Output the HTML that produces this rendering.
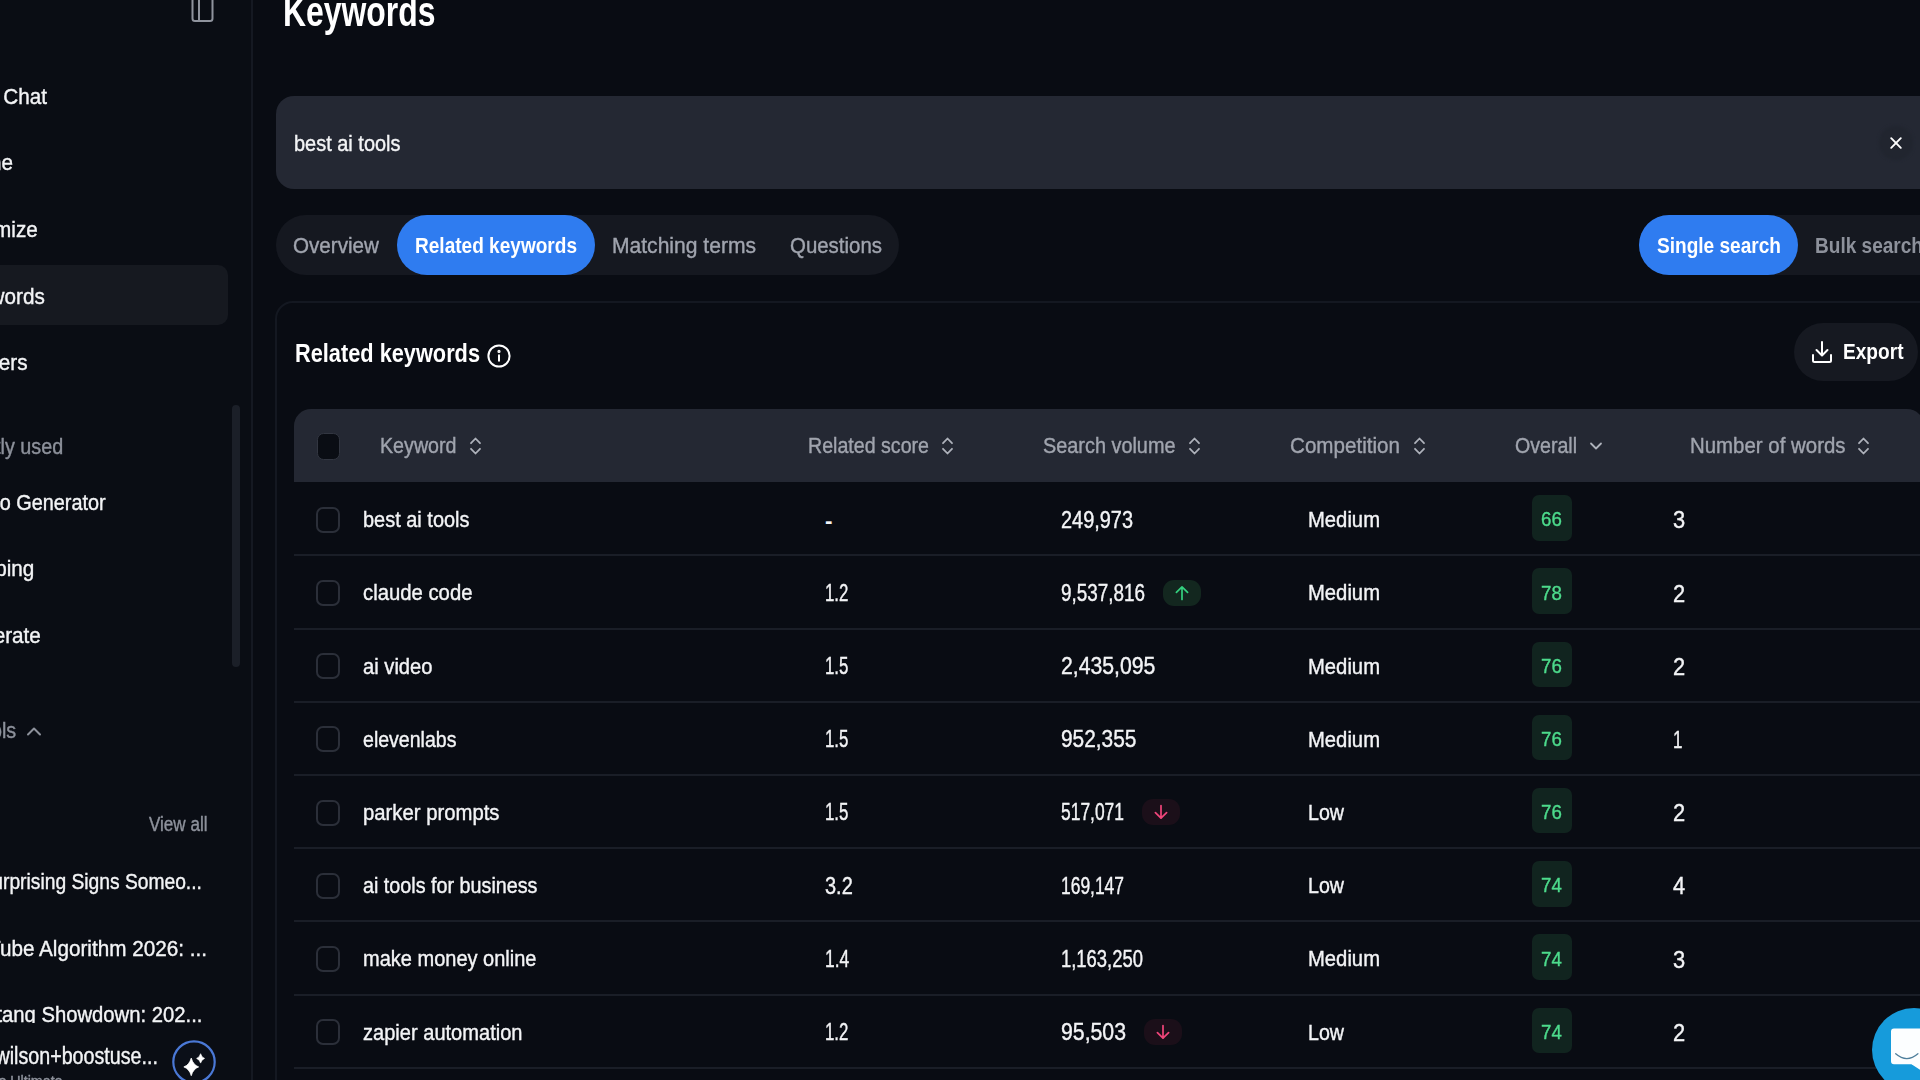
<!DOCTYPE html>
<html lang="en">
<head>
<meta charset="utf-8">
<title>Keywords</title>
<style>
*{box-sizing:border-box;margin:0;padding:0}
html,body{width:1920px;height:1080px;overflow:hidden;background:#090c13}
body{font-family:"Liberation Sans",sans-serif}
#app{position:relative;width:1920px;height:1080px;overflow:hidden;background:#090c13}
#app>*{position:absolute}
.t{white-space:nowrap;display:block;-webkit-text-stroke:0.4px currentColor}
.t.b{-webkit-text-stroke:0}
aside.side{left:0;top:0;width:253px;height:1080px;background:#0a0d14;border-right:2px solid #151922}
.navact{left:-20px;top:265px;width:248px;height:59.7px;border-radius:10px;background:#161920}
.sbar{left:232px;top:405px;width:8px;height:262px;border-radius:4px;background:#1b1f28}
.search{left:276px;top:96px;width:1700px;height:92.5px;border-radius:18px;background:#242833}
.xbtn{left:1878.5px;top:125.5px;width:34px;height:34px;border-radius:17px;background:#21252f;filter:blur(1.5px)}
.tabs{left:276px;top:215px;width:623.2px;height:60px;border-radius:30px;background:#151820}
.tabact{left:397px;top:215px;width:197.5px;height:60px;border-radius:30px;background:#2f7cf0}
.mode{left:1639px;top:215px;width:400px;height:60px;border-radius:30px;background:#151820}
.modeact{left:1639px;top:215px;width:158.5px;height:60px;border-radius:30px;background:#2f7cf0}
.card{left:275px;top:300.5px;width:1700px;height:900px;border-radius:18px;border:2px solid #141821;background:#090c13}
.export{left:1794px;top:322.5px;width:124px;height:58.5px;border-radius:30px;background:#161921}
.thead{left:293.5px;top:408.5px;width:1630px;height:73px;border-radius:17px 17px 0 0;background:#242833}
.hcb{left:316.5px;top:433px;width:23.5px;height:26.5px;border-radius:6.5px;background:#0a0d14;border:1.5px solid #323641}
.cb{left:316.2px;width:23.6px;height:26.2px;border-radius:7px;border:2px solid #2b2f39}
.sep{left:294px;width:1700px;height:2px;background:#1a1e27}
.badge{left:1532px;width:39.5px;height:45.5px;border-radius:7px;background:#11241f}
.trend{width:38px;height:26px;border-radius:11px;display:flex;align-items:center;justify-content:center}
.userbg{left:0;top:1022.5px;width:251px;height:60px;background:#0a0d14;z-index:2}
.ic{overflow:visible}

</style>
</head>
<body>
<div id="app">
<aside class="side"></aside>
<div class="navact"></div>
<div class="sbar"></div>
<svg class="ic" style="left:190px;top:-8px" width="26" height="32" viewBox="0 0 26 32" fill="none" stroke="#8f939d" stroke-width="2"><rect x="2.5" y="1" width="20" height="28" rx="2.5"/><path d="M9 1v28"/></svg>
<svg class="ic" style="left:26px;top:724px" width="16" height="14" viewBox="0 0 16 14" fill="none" stroke="#8d919b" stroke-width="2" stroke-linecap="round" stroke-linejoin="round"><path d="M2 10.5 8 4.5l6 6"/></svg>
<main class="search"></main>
<div class="xbtn"></div>
<svg class="ic" style="left:1889.5px;top:136.5px" width="12" height="12" viewBox="0 0 12 12" fill="none" stroke="#ffffff" stroke-width="1.9" stroke-linecap="round"><path d="M1.2 1.2l9.6 9.6M10.8 1.2 1.2 10.8"/></svg>
<nav class="tabs"></nav>
<div class="tabact"></div>
<div class="mode"></div>
<div class="modeact"></div>
<section class="card"></section>
<svg class="ic" style="left:486.5px;top:343.5px" width="24" height="24" viewBox="0 0 24 24" fill="none" stroke="#ffffff" stroke-width="2" stroke-linecap="round"><circle cx="12" cy="12" r="10.6"/><path d="M12 11.2v5.6"/><circle cx="12" cy="7.4" r="0.6" fill="#fff"/></svg>
<div class="export"></div>
<svg class="ic" style="left:1811px;top:340px" width="22" height="24" viewBox="0 0 22 24" fill="none" stroke="#ffffff" stroke-width="2" stroke-linecap="round" stroke-linejoin="round"><path d="M11 2v13M5.5 10 11 15.5 16.500 10M2 15v5.500a1.500 1.500 0 0 0 1.500 1.500h15a1.500 1.500 0 0 0 1.500-1.500V15"/></svg>
<div class="thead"></div>
<div class="hcb"></div>
<svg class="ic" style="left:469px;top:436px" width="13" height="20" viewBox="0 0 13 20" fill="none" stroke="#aeb2bb" stroke-width="1.8" stroke-linecap="round" stroke-linejoin="round"><path d="M2 7.2 6.500 2.500 11 7.200M2 12.800 6.500 17.500 11 12.800"/></svg>
<svg class="ic" style="left:940.5px;top:436px" width="13" height="20" viewBox="0 0 13 20" fill="none" stroke="#aeb2bb" stroke-width="1.8" stroke-linecap="round" stroke-linejoin="round"><path d="M2 7.2 6.500 2.500 11 7.200M2 12.800 6.500 17.500 11 12.800"/></svg>
<svg class="ic" style="left:1187.5px;top:436px" width="13" height="20" viewBox="0 0 13 20" fill="none" stroke="#aeb2bb" stroke-width="1.8" stroke-linecap="round" stroke-linejoin="round"><path d="M2 7.2 6.500 2.500 11 7.200M2 12.800 6.500 17.500 11 12.800"/></svg>
<svg class="ic" style="left:1412.5px;top:436px" width="13" height="20" viewBox="0 0 13 20" fill="none" stroke="#aeb2bb" stroke-width="1.8" stroke-linecap="round" stroke-linejoin="round"><path d="M2 7.2 6.500 2.500 11 7.200M2 12.800 6.500 17.500 11 12.800"/></svg>
<svg class="ic" style="left:1857px;top:436px" width="13" height="20" viewBox="0 0 13 20" fill="none" stroke="#aeb2bb" stroke-width="1.8" stroke-linecap="round" stroke-linejoin="round"><path d="M2 7.2 6.500 2.500 11 7.200M2 12.800 6.500 17.500 11 12.800"/></svg>
<svg class="ic" style="left:1589px;top:440px" width="14" height="12" viewBox="0 0 14 12" fill="none" stroke="#aeb2bb" stroke-width="1.8" stroke-linecap="round" stroke-linejoin="round"><path d="M2 3.500 7 8.500l5-5"/></svg>

<div class="cb" style="top:506.7px"></div>
<div class="sep" style="top:554.3px"></div>
<div class="badge" style="top:495.1px"></div>
<div class="cb" style="top:579.9px"></div>
<div class="sep" style="top:627.5px"></div>
<div class="badge" style="top:568.3px"></div>
<div class="trend" style="left:1163.0px;top:579.5px;background:#13271f"><svg width="20" height="20" viewBox="0 0 20 20" fill="none" stroke="#34d17f" stroke-width="1.7" stroke-linecap="round" stroke-linejoin="round"><path d="M10 16.5V3.8M4.4 9.4 10 3.800l5.600 5.600"/></svg></div>
<div class="cb" style="top:653.1px"></div>
<div class="sep" style="top:700.7px"></div>
<div class="badge" style="top:641.5px"></div>
<div class="cb" style="top:726.3px"></div>
<div class="sep" style="top:773.9px"></div>
<div class="badge" style="top:714.7px"></div>
<div class="cb" style="top:799.5px"></div>
<div class="sep" style="top:847.1px"></div>
<div class="badge" style="top:787.9px"></div>
<div class="trend" style="left:1142.0px;top:799.1px;background:#1b0f19"><svg width="20" height="20" viewBox="0 0 20 20" fill="none" stroke="#f0457a" stroke-width="1.7" stroke-linecap="round" stroke-linejoin="round"><path d="M10 3.500v12.700M4.400 10.600 10 16.200l5.600-5.600"/></svg></div>
<div class="cb" style="top:872.7px"></div>
<div class="sep" style="top:920.3px"></div>
<div class="badge" style="top:861.1px"></div>
<div class="cb" style="top:945.9px"></div>
<div class="sep" style="top:993.5px"></div>
<div class="badge" style="top:934.3px"></div>
<div class="cb" style="top:1019.1px"></div>
<div class="sep" style="top:1066.7px"></div>
<div class="badge" style="top:1007.5px"></div>
<div class="trend" style="left:1144.0px;top:1018.7px;background:#1b0f19"><svg width="20" height="20" viewBox="0 0 20 20" fill="none" stroke="#f0457a" stroke-width="1.7" stroke-linecap="round" stroke-linejoin="round"><path d="M10 3.500v12.700M4.400 10.600 10 16.200l5.600-5.600"/></svg></div>
<span class="t" style="font-size:22.5px;line-height:27.0px;top:82.70px;color:#f3f4f6;right:1872.8px;transform-origin:100% 0;transform:scaleX(0.9200);">AI Chat</span>
<span class="t" style="font-size:22.5px;line-height:27.0px;top:149.20px;color:#f3f4f6;right:1907.2px;transform-origin:100% 0;transform:scaleX(0.9200);">Home</span>
<span class="t" style="font-size:22.5px;line-height:27.0px;top:215.70px;color:#f3f4f6;right:1882.0px;transform-origin:100% 0;transform:scaleX(0.9200);">Optimize</span>
<span class="t" style="font-size:22.5px;line-height:27.0px;top:282.70px;color:#f3f4f6;right:1875.0px;transform-origin:100% 0;transform:scaleX(0.9200);">Keywords</span>
<span class="t" style="font-size:22.5px;line-height:27.0px;top:349.20px;color:#f3f4f6;right:1892.0px;transform-origin:100% 0;transform:scaleX(0.9200);">Outliers</span>
<span class="t" style="font-size:21.5px;line-height:25.8px;top:434.95px;color:#8d919b;right:1857.0px;transform-origin:100% 0;transform:scaleX(0.9200);">Recently used</span>
<span class="t" style="font-size:22.5px;line-height:27.0px;top:488.70px;color:#f3f4f6;right:1814.0px;transform-origin:100% 0;transform:scaleX(0.8830);">Video Generator</span>
<span class="t" style="font-size:22.5px;line-height:27.0px;top:555.20px;color:#f3f4f6;right:1886.0px;transform-origin:100% 0;transform:scaleX(0.9200);">Clipping</span>
<span class="t" style="font-size:22.5px;line-height:27.0px;top:621.70px;color:#f3f4f6;right:1879.0px;transform-origin:100% 0;transform:scaleX(0.9200);">Generate</span>
<span class="t" style="font-size:21.5px;line-height:25.8px;top:718.65px;color:#8d919b;right:1904.0px;transform-origin:100% 0;transform:scaleX(0.9200);">Tools</span>
<span class="t" style="font-size:19.5px;line-height:23.4px;top:812.54px;color:#8d919b;left:149px;transform-origin:0 0;transform:scaleX(0.8752);">View all</span>
<span class="t" style="font-size:22.5px;line-height:27.0px;top:867.70px;color:#f3f4f6;right:1718.0px;transform-origin:100% 0;transform:scaleX(0.8550);">5 Surprising Signs Someo...</span>
<span class="t" style="font-size:22.5px;line-height:27.0px;top:934.70px;color:#f3f4f6;right:1713.0px;transform-origin:100% 0;transform:scaleX(0.9200);">YouTube Algorithm 2026: ...</span>
<span class="t" style="font-size:22.5px;line-height:27.0px;top:1000.70px;color:#f3f4f6;right:1718.0px;transform-origin:100% 0;transform:scaleX(0.9000);">Mustang Showdown: 202...</span>
<span class="t b" style="font-size:42px;line-height:50.4px;top:-12.75px;color:#ffffff;font-weight:700;left:283px;transform-origin:0 0;transform:scaleX(0.7597);">Keywords</span>
<span class="t" style="font-size:22.5px;line-height:27.0px;top:129.70px;color:#f3f4f6;left:294px;transform-origin:0 0;transform:scaleX(0.8869);">best ai tools</span>
<span class="t" style="font-size:22.5px;line-height:27.0px;top:231.70px;color:#a0a4ae;left:293px;transform-origin:0 0;transform:scaleX(0.9170);">Overview</span>
<span class="t b" style="font-size:22.5px;line-height:27.0px;top:231.70px;color:#ffffff;font-weight:700;left:415px;transform-origin:0 0;transform:scaleX(0.8467);">Related keywords</span>
<span class="t" style="font-size:22.5px;line-height:27.0px;top:231.70px;color:#a0a4ae;left:612px;transform-origin:0 0;transform:scaleX(0.9362);">Matching terms</span>
<span class="t" style="font-size:22.5px;line-height:27.0px;top:231.70px;color:#a0a4ae;left:790px;transform-origin:0 0;transform:scaleX(0.9081);">Questions</span>
<span class="t b" style="font-size:22.5px;line-height:27.0px;top:231.70px;color:#ffffff;font-weight:700;left:1656.5px;transform-origin:0 0;transform:scaleX(0.8474);">Single search</span>
<span class="t b" style="font-size:22.5px;line-height:27.0px;top:231.70px;color:#8d919b;font-weight:700;left:1815px;transform-origin:0 0;transform:scaleX(0.8466);">Bulk search</span>
<span class="t b" style="font-size:26px;line-height:31.2px;top:337.89px;color:#ffffff;font-weight:700;left:294.5px;transform-origin:0 0;transform:scaleX(0.8367);">Related keywords</span>
<span class="t b" style="font-size:22px;line-height:26.4px;top:338.78px;color:#ffffff;font-weight:700;left:1843px;transform-origin:0 0;transform:scaleX(0.8682);">Export</span>
<span class="t" style="font-size:22.5px;line-height:27.0px;top:432.20px;color:#a0a4ae;left:380px;transform-origin:0 0;transform:scaleX(0.8738);">Keyword</span>
<span class="t" style="font-size:22.5px;line-height:27.0px;top:432.20px;color:#a0a4ae;left:808px;transform-origin:0 0;transform:scaleX(0.8716);">Related score</span>
<span class="t" style="font-size:22.5px;line-height:27.0px;top:432.20px;color:#a0a4ae;left:1042.7px;transform-origin:0 0;transform:scaleX(0.8829);">Search volume</span>
<span class="t" style="font-size:22.5px;line-height:27.0px;top:432.20px;color:#a0a4ae;left:1290px;transform-origin:0 0;transform:scaleX(0.9162);">Competition</span>
<span class="t" style="font-size:22.5px;line-height:27.0px;top:432.20px;color:#a0a4ae;left:1514.5px;transform-origin:0 0;transform:scaleX(0.8698);">Overall</span>
<span class="t" style="font-size:22.5px;line-height:27.0px;top:432.20px;color:#a0a4ae;left:1690px;transform-origin:0 0;transform:scaleX(0.9077);">Number of words</span>
<span class="t" style="font-size:22.5px;line-height:27.0px;top:506.20px;color:#f3f4f6;left:362.5px;transform-origin:0 0;transform:scaleX(0.8869);">best ai tools</span>
<span class="t b" style="font-size:22.5px;line-height:27.0px;top:507.20px;color:#f3f4f6;font-weight:700;left:825px;transform-origin:0 0;">-</span>
<span class="t" style="font-size:23.3px;line-height:27.96px;top:506.65px;color:#f3f4f6;left:1061px;transform-origin:0 0;transform:scaleX(0.8549);">249,973</span>
<span class="t" style="font-size:22.5px;line-height:27.0px;top:506.20px;color:#f3f4f6;left:1307.5px;transform-origin:0 0;transform:scaleX(0.8996);">Medium</span>
<span class="t" style="font-size:21px;line-height:25.2px;top:506.32px;color:#4ddb8c;left:1541.3px;transform-origin:0 0;transform:scaleX(0.8904);">66</span>
<span class="t" style="font-size:24.3px;line-height:29.16px;top:505.40px;color:#f3f4f6;left:1672.5px;transform-origin:0 0;transform:scaleX(0.9000);">3</span>
<span class="t" style="font-size:22.5px;line-height:27.0px;top:579.40px;color:#f3f4f6;left:362.5px;transform-origin:0 0;transform:scaleX(0.9023);">claude code</span>
<span class="t" style="font-size:23.3px;line-height:27.96px;top:579.85px;color:#f3f4f6;left:825px;transform-origin:0 0;transform:scaleX(0.7224);">1.2</span>
<span class="t" style="font-size:23.3px;line-height:27.96px;top:579.85px;color:#f3f4f6;left:1061px;transform-origin:0 0;transform:scaleX(0.8104);">9,537,816</span>
<span class="t" style="font-size:22.5px;line-height:27.0px;top:579.40px;color:#f3f4f6;left:1307.5px;transform-origin:0 0;transform:scaleX(0.8996);">Medium</span>
<span class="t" style="font-size:21px;line-height:25.2px;top:579.52px;color:#4ddb8c;left:1541.3px;transform-origin:0 0;transform:scaleX(0.8904);">78</span>
<span class="t" style="font-size:24.3px;line-height:29.16px;top:578.60px;color:#f3f4f6;left:1672.5px;transform-origin:0 0;transform:scaleX(0.9000);">2</span>
<span class="t" style="font-size:22.5px;line-height:27.0px;top:652.60px;color:#f3f4f6;left:362.5px;transform-origin:0 0;transform:scaleX(0.8961);">ai video</span>
<span class="t" style="font-size:23.3px;line-height:27.96px;top:653.05px;color:#f3f4f6;left:825px;transform-origin:0 0;transform:scaleX(0.7224);">1.5</span>
<span class="t" style="font-size:23.3px;line-height:27.96px;top:653.05px;color:#f3f4f6;left:1061px;transform-origin:0 0;transform:scaleX(0.9097);">2,435,095</span>
<span class="t" style="font-size:22.5px;line-height:27.0px;top:652.60px;color:#f3f4f6;left:1307.5px;transform-origin:0 0;transform:scaleX(0.8996);">Medium</span>
<span class="t" style="font-size:21px;line-height:25.2px;top:652.72px;color:#4ddb8c;left:1541.3px;transform-origin:0 0;transform:scaleX(0.8904);">76</span>
<span class="t" style="font-size:24.3px;line-height:29.16px;top:651.80px;color:#f3f4f6;left:1672.5px;transform-origin:0 0;transform:scaleX(0.9000);">2</span>
<span class="t" style="font-size:22.5px;line-height:27.0px;top:725.80px;color:#f3f4f6;left:362.5px;transform-origin:0 0;transform:scaleX(0.8691);">elevenlabs</span>
<span class="t" style="font-size:23.3px;line-height:27.96px;top:726.25px;color:#f3f4f6;left:825px;transform-origin:0 0;transform:scaleX(0.7224);">1.5</span>
<span class="t" style="font-size:23.3px;line-height:27.96px;top:726.25px;color:#f3f4f6;left:1061px;transform-origin:0 0;transform:scaleX(0.8941);">952,355</span>
<span class="t" style="font-size:22.5px;line-height:27.0px;top:725.80px;color:#f3f4f6;left:1307.5px;transform-origin:0 0;transform:scaleX(0.8996);">Medium</span>
<span class="t" style="font-size:21px;line-height:25.2px;top:725.92px;color:#4ddb8c;left:1541.3px;transform-origin:0 0;transform:scaleX(0.8904);">76</span>
<span class="t" style="font-size:24.3px;line-height:29.16px;top:725.00px;color:#f3f4f6;left:1672.5px;transform-origin:0 0;transform:scaleX(0.7000);">1</span>
<span class="t" style="font-size:22.5px;line-height:27.0px;top:799.00px;color:#f3f4f6;left:362.5px;transform-origin:0 0;transform:scaleX(0.9021);">parker prompts</span>
<span class="t" style="font-size:23.3px;line-height:27.96px;top:799.45px;color:#f3f4f6;left:825px;transform-origin:0 0;transform:scaleX(0.7224);">1.5</span>
<span class="t" style="font-size:23.3px;line-height:27.96px;top:799.45px;color:#f3f4f6;left:1061px;transform-origin:0 0;transform:scaleX(0.7481);">517,071</span>
<span class="t" style="font-size:22.5px;line-height:27.0px;top:799.00px;color:#f3f4f6;left:1307.5px;transform-origin:0 0;transform:scaleX(0.8721);">Low</span>
<span class="t" style="font-size:21px;line-height:25.2px;top:799.12px;color:#4ddb8c;left:1541.3px;transform-origin:0 0;transform:scaleX(0.8904);">76</span>
<span class="t" style="font-size:24.3px;line-height:29.16px;top:798.20px;color:#f3f4f6;left:1672.5px;transform-origin:0 0;transform:scaleX(0.9000);">2</span>
<span class="t" style="font-size:22.5px;line-height:27.0px;top:872.20px;color:#f3f4f6;left:362.5px;transform-origin:0 0;transform:scaleX(0.8775);">ai tools for business</span>
<span class="t" style="font-size:23.3px;line-height:27.96px;top:872.65px;color:#f3f4f6;left:825px;transform-origin:0 0;transform:scaleX(0.8583);">3.2</span>
<span class="t" style="font-size:23.3px;line-height:27.96px;top:872.65px;color:#f3f4f6;left:1061px;transform-origin:0 0;transform:scaleX(0.7481);">169,147</span>
<span class="t" style="font-size:22.5px;line-height:27.0px;top:872.20px;color:#f3f4f6;left:1307.5px;transform-origin:0 0;transform:scaleX(0.8721);">Low</span>
<span class="t" style="font-size:21px;line-height:25.2px;top:872.32px;color:#4ddb8c;left:1541.3px;transform-origin:0 0;transform:scaleX(0.8904);">74</span>
<span class="t" style="font-size:24.3px;line-height:29.16px;top:871.40px;color:#f3f4f6;left:1672.5px;transform-origin:0 0;transform:scaleX(0.9000);">4</span>
<span class="t" style="font-size:22.5px;line-height:27.0px;top:945.40px;color:#f3f4f6;left:362.5px;transform-origin:0 0;transform:scaleX(0.8892);">make money online</span>
<span class="t" style="font-size:23.3px;line-height:27.96px;top:945.85px;color:#f3f4f6;left:825px;transform-origin:0 0;transform:scaleX(0.7471);">1.4</span>
<span class="t" style="font-size:23.3px;line-height:27.96px;top:945.85px;color:#f3f4f6;left:1061px;transform-origin:0 0;transform:scaleX(0.7911);">1,163,250</span>
<span class="t" style="font-size:22.5px;line-height:27.0px;top:945.40px;color:#f3f4f6;left:1307.5px;transform-origin:0 0;transform:scaleX(0.8996);">Medium</span>
<span class="t" style="font-size:21px;line-height:25.2px;top:945.52px;color:#4ddb8c;left:1541.3px;transform-origin:0 0;transform:scaleX(0.8904);">74</span>
<span class="t" style="font-size:24.3px;line-height:29.16px;top:944.60px;color:#f3f4f6;left:1672.5px;transform-origin:0 0;transform:scaleX(0.9000);">3</span>
<span class="t" style="font-size:22.5px;line-height:27.0px;top:1018.60px;color:#f3f4f6;left:362.5px;transform-origin:0 0;transform:scaleX(0.8918);">zapier automation</span>
<span class="t" style="font-size:23.3px;line-height:27.96px;top:1019.05px;color:#f3f4f6;left:825px;transform-origin:0 0;transform:scaleX(0.7224);">1.2</span>
<span class="t" style="font-size:23.3px;line-height:27.96px;top:1019.05px;color:#f3f4f6;left:1061px;transform-origin:0 0;transform:scaleX(0.9121);">95,503</span>
<span class="t" style="font-size:22.5px;line-height:27.0px;top:1018.60px;color:#f3f4f6;left:1307.5px;transform-origin:0 0;transform:scaleX(0.8721);">Low</span>
<span class="t" style="font-size:21px;line-height:25.2px;top:1018.72px;color:#4ddb8c;left:1541.3px;transform-origin:0 0;transform:scaleX(0.8904);">74</span>
<span class="t" style="font-size:24.3px;line-height:29.16px;top:1017.80px;color:#f3f4f6;left:1672.5px;transform-origin:0 0;transform:scaleX(0.9000);">2</span>
<span class="t" style="font-size:23px;line-height:27.6px;top:1042.53px;color:#f3f4f6;z-index:3;right:1762.0px;transform-origin:100% 0;transform:scaleX(0.8550);">wilson+boostuse...</span>
<span class="t" style="font-size:15px;line-height:18.0px;top:1071.80px;color:#8d919b;z-index:3;right:1857.0px;transform-origin:100% 0;transform:scaleX(0.9500);">Pro Ultimate</span>
<div class="userbg"></div>
<svg class="ic" style="left:172px;top:1040px;z-index:4" width="44" height="44" viewBox="0 0 44 44" fill="none"><circle cx="22" cy="22" r="20.700" stroke="#4a78d6" stroke-width="2.200" fill="#0b0f18"/><path d="M19.25 18.10Q21.15 25.00 26.65 26.90Q21.15 28.80 19.25 35.70Q17.35 28.80 11.85 26.90Q17.35 25.00 19.25 18.10z" fill="#fff" stroke="#fff" stroke-width="0.800" stroke-linejoin="round"/><path d="M28.60 13.70Q29.60 17.40 32.60 18.40Q29.60 19.40 28.60 23.10Q27.60 19.40 24.60 18.40Q27.60 17.40 28.60 13.70z" fill="#fff" stroke="#fff" stroke-width="0.600" stroke-linejoin="round"/></svg>
<svg class="ic" style="left:1870px;top:1006px;z-index:5" width="60" height="80" viewBox="0 0 60 80" fill="none"><circle cx="44" cy="44" r="42" fill="#169bdb"/><path d="M24 22.500h36v35.700H41.500l10 6.500V58.200H24a3 3 0 0 1-3-3V25.500a3 3 0 0 1 3-3z" fill="#fcfeff"/><path d="M41.500 58h20v9z" fill="#fcfeff"/><path d="M25.700 47.800Q36.800 57.400 47.900 47.800" stroke="#4f7f9c" stroke-width="1.300" stroke-linecap="round"/></svg>

</div>
</body>
</html>
